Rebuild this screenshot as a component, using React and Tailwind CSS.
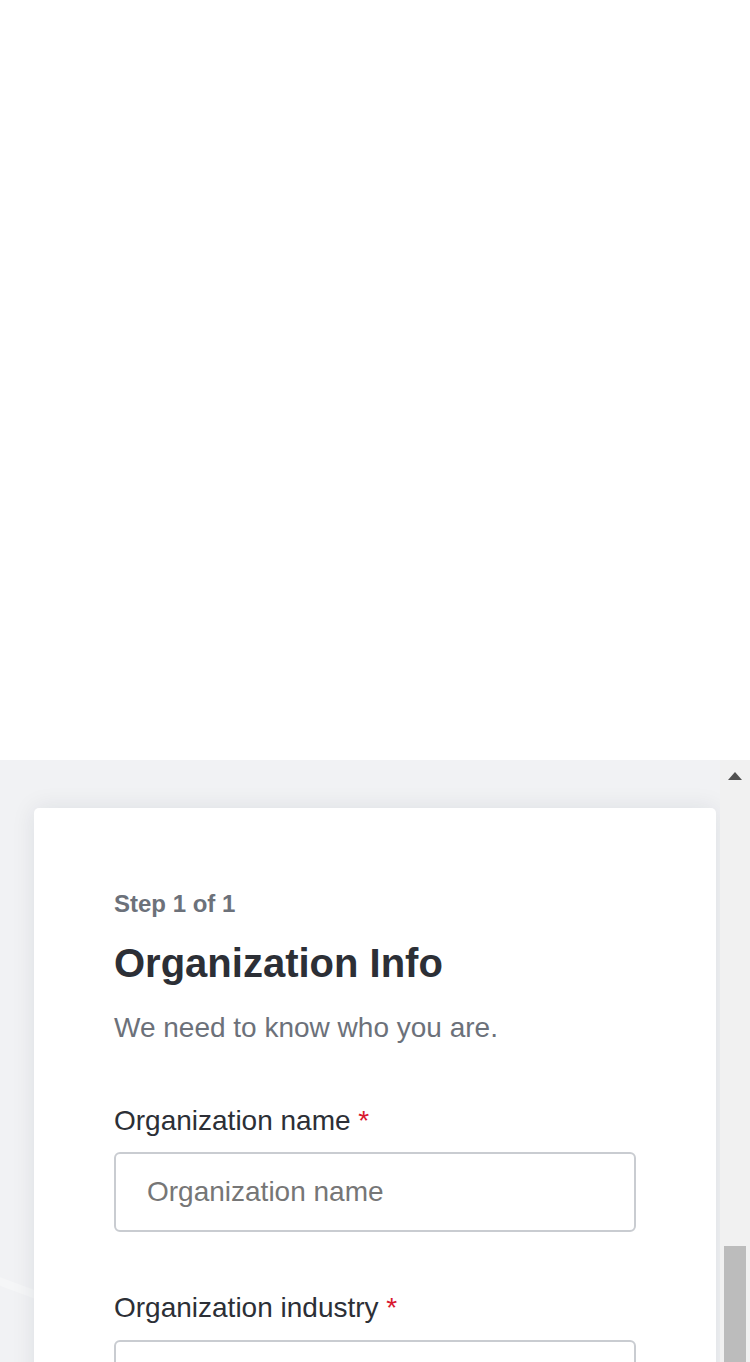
export default function App() {
  return (
    <div className="w-[750px] h-[1362px] overflow-hidden bg-white" style={{ fontFamily: '"Liberation Sans", Arial, sans-serif' }}>
      <div className="h-[760px] bg-white" />
      <div className="flex h-[602px]">
        <div className="relative w-[720px] h-full overflow-hidden bg-[#f1f2f4]">
          <svg className="absolute left-0 top-0" width="720" height="602" viewBox="0 0 720 602">
            <path d="M-20 514 L 120 566" stroke="#f5f6f7" strokeWidth="8" fill="none" />
          </svg>
          <div className="relative ml-[34px] mt-[48px] w-[682px] rounded-[5px] bg-white px-[80px] pt-[82px] pb-[80px] shadow-[0_0_24px_rgba(20,30,50,0.09)]">
            <div className="text-[24px] leading-[28px] font-bold text-[#6c717a]">Step 1 of 1</div>
            <h1 className="mt-[21px] text-[40px] leading-[48px] font-bold text-[#2c2f36]">Organization Info</h1>
            <p className="mt-[25px] text-[28px] leading-[32px] text-[#6c717a]">We need to know who you are.</p>
            <label className="mt-[61px] block text-[28px] leading-[32px] text-[#2c2f36]">
              Organization name <span className="text-[#d9182f]">*</span>
            </label>
            <input
              className="mt-[15px] block h-[80px] w-full rounded-[6px] border-2 border-[#c9ccd1] bg-white px-[31px] text-[28px] text-[#2c2f36] placeholder:text-[#767676] outline-none"
              placeholder="Organization name"
              style={{ fontFamily: '"Liberation Sans", Arial, sans-serif' }}
            />
            <label className="mt-[60px] block text-[28px] leading-[32px] text-[#2c2f36]">
              Organization industry <span className="text-[#d9182f]">*</span>
            </label>
            <div className="mt-[16px] h-[80px] w-full rounded-[6px] border-2 border-[#c9ccd1] bg-white" />
          </div>
        </div>
        <div className="flex w-[30px] flex-col items-center bg-[#f1f1f1]">
          <svg className="mt-[11px]" width="16" height="10" viewBox="0 0 16 10">
            <path d="M8 1 L15 9 L1 9 Z" fill="#505050" />
          </svg>
          <div className="mt-[465px] w-[22px] flex-1 bg-[#bcbcbc]" />
        </div>
      </div>
    </div>
  );
}
